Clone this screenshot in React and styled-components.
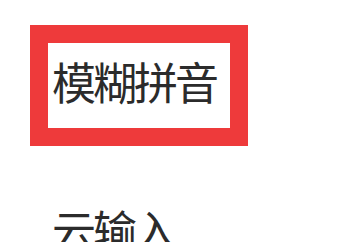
import React from "react";
import styled, { createGlobalStyle } from "styled-components";

const Global = createGlobalStyle`
  html, body { margin: 0; padding: 0; background: #ffffff; overflow: hidden; }
  body { font-family: "Noto Sans CJK SC", "Noto Sans", sans-serif; }
`;

const Page = styled.div`
  width: 349px;
  height: 242px;
  overflow: hidden;
  display: flex;
  flex-direction: column;
  padding: 25px 0 0 30px;
  box-sizing: border-box;
`;

const Highlight = styled.div`
  flex-shrink: 0;
  width: 218px;
  height: 121px;
  box-sizing: border-box;
  border: 18px solid #ee3a3b;
  display: flex;
  align-items: center;
  padding-left: 4px;
`;

const Label = styled.div`
  flex-shrink: 0;
  font-size: 44px;
  line-height: 44px;
  letter-spacing: -3px;
  color: #2b2b2b;
  white-space: nowrap;
  padding-left: ${(p) => p.$indent || 0}px;
  margin-top: ${(p) => p.$top || 0}px;
  margin-bottom: ${(p) => p.$bottom || 0}px;
`;

export default function App() {
  return (
    <>
      <Global />
      <Page>
        <Highlight>
          <Label $bottom={10}>模糊拼音</Label>
        </Highlight>
        <Label $indent={22} $top={61}>云输入</Label>
      </Page>
    </>
  );
}
